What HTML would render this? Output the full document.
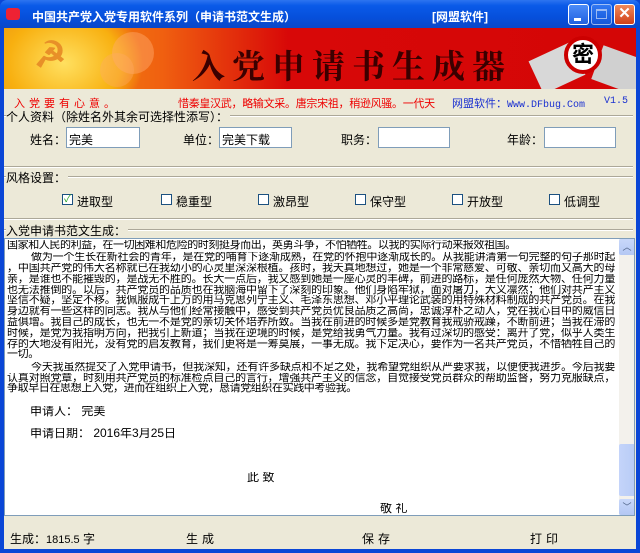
<!DOCTYPE html>
<html><head><meta charset="utf-8"><style>
*{margin:0;padding:0;box-sizing:border-box}
body{width:640px;height:553px;overflow:hidden;background:#0a46d6;font-family:"Liberation Sans","Noto Sans CJK SC","WenQuanYi Zen Hei",sans-serif;font-size:12px;color:#000;position:relative}
.abs{position:absolute;white-space:nowrap}
#title{left:0;top:0;width:640px;height:28px;background:linear-gradient(#2d74f0 0%,#0a5ae8 20%,#0650dc 60%,#0a47c8 100%);border-radius:7px 7px 0 0}
#client{left:4px;top:28px;width:632px;height:521px;background:#ece9d8}
#banner{left:4px;top:28px;width:632px;height:61px;background:linear-gradient(90deg,#f0a010 0%,#f06010 25%,#d80808 45%,#d40606 100%);overflow:hidden}
.tb{top:4px;width:21px;height:21px;border:1px solid #fff;border-radius:3px;background:linear-gradient(#4c8cf8,#2060e0)}
.line{height:2px;border-top:1px solid #aca899;border-bottom:1px solid #fff}
.inp{height:21px;background:#fff;border:1px solid #7f9db9;padding:3px 2px;font-size:12px}
.cb{width:11px;height:11px;border:1px solid #1c5180;background:#fff}
#text{left:4px;top:238px;width:631px;height:278px;background:#fff;border:1px solid #7f9db9;overflow:hidden}
.tl{position:absolute;left:2px;width:608px;white-space:normal;text-align:justify;text-align-last:justify;font-size:11px;letter-spacing:-0.4px;line-height:11px;height:12px;overflow:hidden;color:#000}
.nl{text-align-last:left}
.ind{text-indent:24px}
</style></head><body>
<div class="abs" id="title"></div>
<div class="abs" style="left:6px;top:8px;width:14px;height:12px;background:#e23;border-radius:3px"></div>
<div class="abs" style="left:32px;top:8px;color:#fff;font-weight:bold;font-size:12px">中国共产党入党专用软件系列（申请书范文生成）</div>
<div class="abs" style="left:432px;top:8px;color:#fff;font-weight:bold;font-size:12px">[网盟软件]</div>
<div class="abs tb" style="left:568px"><div style="position:absolute;left:5px;top:13px;width:7px;height:3px;background:#fff"></div></div>
<div class="abs tb" style="left:591px;opacity:.6"><div style="position:absolute;left:4px;top:4px;width:11px;height:10px;border:1px solid #fff;border-top-width:2px"></div></div>
<div class="abs tb" style="left:614px;background:linear-gradient(#f08a5a,#d0401a);color:#fff;font-weight:bold;font-size:15px;text-align:center;line-height:18px">✕</div>
<div class="abs" id="client"></div>
<div class="abs" id="banner">
  <div class="abs" style="left:-20px;top:-30px;width:160px;height:130px;border-radius:50%;background:radial-gradient(#ffe060,#f8b010 50%,rgba(240,120,16,0) 70%)"></div>
  <div class="abs" style="left:108px;top:4px;width:42px;height:42px;border-radius:50%;background:rgba(255,170,110,.45)"></div>
  <div class="abs" style="left:96px;top:25px;width:34px;height:34px;border-radius:50%;background:rgba(255,170,110,.35)"></div>
  <div class="abs" style="left:30px;top:6px;font-size:36px;color:#e89028;font-weight:bold">☭</div>
  <div class="abs" style="left:188px;top:13px;font-size:33px;letter-spacing:7px;color:#3a0000;font-family:'Noto Serif CJK SC',serif;font-weight:bold">入党申请书生成器</div>
  <div class="abs" style="left:530px;top:22px;width:46px;height:36px;background:#d8d8d8;transform:rotate(-25deg)"></div>
  <div class="abs" style="left:592px;top:24px;width:46px;height:36px;background:#d0d0d0;transform:rotate(20deg)"></div>
  <div class="abs" style="left:560px;top:8px;width:38px;height:38px;border-radius:50%;background:#fff;border:4px solid #c00;font-size:22px;font-weight:bold;text-align:center;line-height:30px">密</div>
</div>
<div class="abs" style="left:14px;top:95px;color:#e00;letter-spacing:4px;font-size:11px">入党要有心意。</div>
<div class="abs" style="left:178px;top:95px;color:#e00;font-size:11px;letter-spacing:-0.3px">惜秦皇汉武，略输文采。唐宗宋祖，稍逊风骚。一代天</div>
<div class="abs" style="left:452px;top:95px;color:#1a30d0;font-size:11px">网盟软件：<span style="font-family:'Liberation Mono',monospace;font-size:10px">Www.DFbug.Com</span></div>
<div class="abs" style="left:604px;top:96px;color:#1a30d0;font-size:10px;font-family:'Liberation Mono',monospace">V1.5</div>

<div class="abs line" style="left:4px;top:115px;width:629px"></div>
<div class="abs" style="left:6px;top:108px;background:#ece9d8;padding-right:2px">个人资料（除姓名外其余可选择性添写）：</div>
<div class="abs" style="left:30px;top:131px">姓名：</div><div class="abs inp" style="left:66px;top:127px;width:74px">完美</div>
<div class="abs" style="left:183px;top:131px">单位：</div><div class="abs inp" style="left:219px;top:127px;width:73px">完美下载</div>
<div class="abs" style="left:341px;top:131px">职务：</div><div class="abs inp" style="left:378px;top:127px;width:72px"></div>
<div class="abs" style="left:507px;top:131px">年龄：</div><div class="abs inp" style="left:544px;top:127px;width:72px"></div>

<div class="abs line" style="left:4px;top:176px;width:629px"></div>
<div class="abs line" style="left:4px;top:166px;width:629px"></div>
<div class="abs" style="left:6px;top:169px;background:#ece9d8;padding-right:2px">风格设置：</div>
<div class="abs cb" style="left:62px;top:194px;font-size:10px;line-height:9px;text-align:center;color:#21a121">✓</div><div class="abs" style="left:77px;top:193px">进取型</div>
<div class="abs cb" style="left:161px;top:194px"></div><div class="abs" style="left:176px;top:193px">稳重型</div>
<div class="abs cb" style="left:258px;top:194px"></div><div class="abs" style="left:273px;top:193px">激昂型</div>
<div class="abs cb" style="left:355px;top:194px"></div><div class="abs" style="left:370px;top:193px">保守型</div>
<div class="abs cb" style="left:452px;top:194px"></div><div class="abs" style="left:467px;top:193px">开放型</div>
<div class="abs cb" style="left:549px;top:194px"></div><div class="abs" style="left:564px;top:193px">低调型</div>

<div class="abs line" style="left:4px;top:218px;width:629px"></div>
<div class="abs line" style="left:4px;top:229px;width:629px"></div>
<div class="abs" style="left:6px;top:222px;background:#ece9d8;padding-right:2px">入党申请书范文生成：</div>

<div class="abs" id="text">
<div class="tl nl" style="top:1px">国家和人民的利益，在一切困难和危险的时刻挺身而出，英勇斗争，不怕牺牲。以我的实际行动来报效祖国。</div>
<div class="tl ind" style="top:13px">做为一个生长在新社会的青年，是在党的哺育下逐渐成熟，在党的怀抱中逐渐成长的。从我能讲清第一句完整的句子那时起</div>
<div class="tl" style="top:24px">，中国共产党的伟大名称就已在我幼小的心灵里深深根植。孩时，我天真地想过，她是一个非常慈爱、可敬、亲切而又高大的母</div>
<div class="tl" style="top:35px">亲，是谁也不能摧毁的，是战无不胜的。长大一点后，我又感到她是一座心灵的丰碑，前进的路标，是任何庞然大物、任何力量</div>
<div class="tl" style="top:46px">也无法推倒的。以后，共产党员的品质也在我脑海中留下了深刻的印象。他们身陷牢狱，面对屠刀，大义凛然；他们对共产主义</div>
<div class="tl" style="top:56px">坚信不疑，坚定不移。我佩服成千上万的用马克思列宁主义、毛泽东思想、邓小平理论武装的用特殊材料制成的共产党员。在我</div>
<div class="tl" style="top:67px">身边就有一些这样的同志。我从与他们经常接触中，感受到共产党员优良品质之高尚，忠诚淳朴之动人，党在我心目中的威信日</div>
<div class="tl" style="top:78px">益俱增。我自己的成长，也无一不是党的亲切关怀培养所致。当我在前进的时候多是党教育我戒骄戒躁，不断前进；当我在滞的</div>
<div class="tl" style="top:89px">时候，是党为我指明方向，把我引上新道；当我在逆境的时候，是党给我勇气力量。我有过深切的感受：离开了党，似乎人类生</div>
<div class="tl" style="top:100px">存的大地没有阳光，没有党的启发教育，我们更将是一筹莫展，一事无成。我下定决心，要作为一名共产党员，不惜牺牲自己的</div>
<div class="tl nl" style="top:110px">一切。</div>
<div class="tl ind" style="top:123px">今天我虽然提交了入党申请书，但我深知，还有许多缺点和不足之处，我希望党组织从严要求我，以便使我进步。今后我要</div>
<div class="tl" style="top:134px">认真对照党章，时刻用共产党员的标准检点自己的言行，增强共产主义的信念，自觉接受党员群众的帮助监督，努力克服缺点，</div>
<div class="tl nl" style="top:144px">争取早日在思想上入党，进而在组织上入党，恳请党组织在实践中考验我。</div>
<div class="tl nl" style="top:167px;left:25px;font-size:12px;height:14px;letter-spacing:0">申请人： 完美</div>
<div class="tl nl" style="top:189px;left:25px;font-size:12px;height:14px;letter-spacing:0">申请日期： 2016年3月25日</div>
<div class="tl nl" style="top:233px;left:242px;font-size:12px;height:14px;letter-spacing:0">此 致</div>
<div class="tl nl" style="top:264px;left:375px;font-size:12px;height:14px;letter-spacing:0">敬 礼</div>
<div class="abs" style="left:614px;top:0;width:16px;height:277px;background:#f3f1ec">
  <div class="abs" style="left:0;top:0;width:16px;height:16px;background:linear-gradient(#c8d8fa,#b4c8f4);border-radius:2px;color:#4d6185;font-size:9px;text-align:center;line-height:16px">︿</div>
  <div class="abs" style="left:0;top:205px;width:16px;height:52px;background:linear-gradient(90deg,#c4d4fa,#b8ccf6);border-radius:2px"></div>
  <div class="abs" style="left:0;top:260px;width:16px;height:16px;background:linear-gradient(#c8d8fa,#b4c8f4);border-radius:2px;color:#4d6185;font-size:9px;text-align:center;line-height:16px">﹀</div>
</div>
</div>

<div class="abs" style="left:10px;top:530px">生成：<span style="font-size:11px">1815.5</span> 字</div>
<div class="abs" style="left:186px;top:530px;letter-spacing:4px">生成</div>
<div class="abs" style="left:362px;top:530px;letter-spacing:4px">保存</div>
<div class="abs" style="left:530px;top:530px;letter-spacing:4px">打印</div>
</body></html>
